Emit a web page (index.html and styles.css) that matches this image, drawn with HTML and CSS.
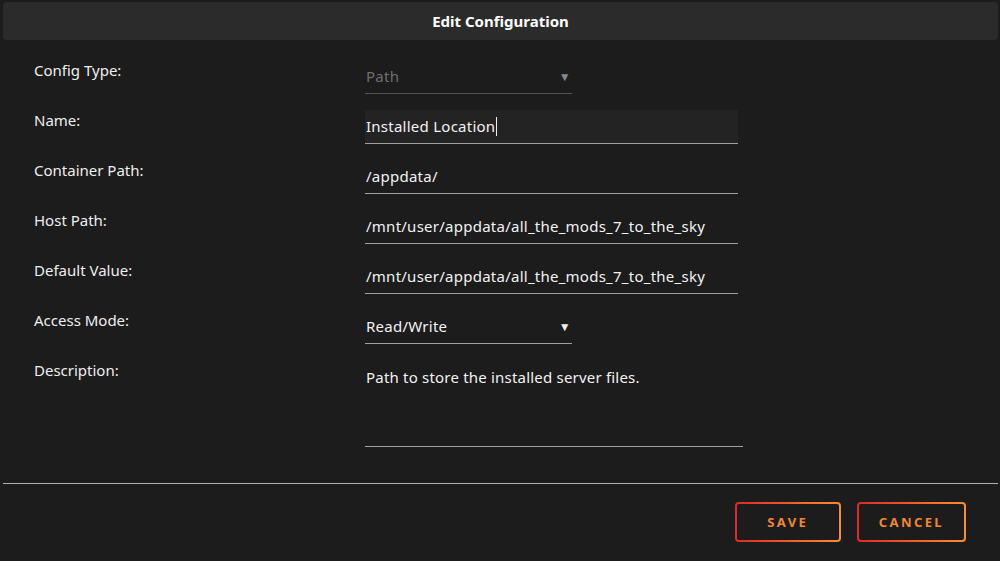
FILE: index.html
```html
<!DOCTYPE html>
<html lang="en">
<head>
    <meta charset="UTF-8">
    <meta name="viewport" content="width=device-width, initial-scale=1.0">
    <title>Edit Configuration</title>
    <link rel="stylesheet" href="styles.css">
</head>
<body>
    <div class="dialog">
        <div class="title-bar">Edit Configuration</div>

        <!-- Config form -->
        <div class="config-form">
            <label class="form-label">Config Type:</label>
            <div class="select-field disabled">
                <span>Path</span>
                <span class="arrow">&#9660;</span>
            </div>

            <label class="form-label">Name:</label>
            <div class="text-field active">
                <span>Installed Location</span><span class="caret"></span>
            </div>

            <label class="form-label">Container Path:</label>
            <div class="text-field"><span>/appdata/</span></div>

            <label class="form-label">Host Path:</label>
            <div class="text-field"><span>/mnt/user/appdata/all_the_mods_7_to_the_sky</span></div>

            <label class="form-label">Default Value:</label>
            <div class="text-field"><span>/mnt/user/appdata/all_the_mods_7_to_the_sky</span></div>

            <label class="form-label">Access Mode:</label>
            <div class="select-field">
                <span>Read/Write</span>
                <span class="arrow">&#9660;</span>
            </div>

            <label class="form-label">Description:</label>
            <div class="textarea-field">Path to store the installed server files.</div>
        </div>

        <div class="divider"></div>

        <div class="actions">
            <button class="action-button"><span>SAVE</span></button>
            <button class="action-button"><span>CANCEL</span></button>
        </div>
    </div>
</body>
</html>
```

FILE: styles.css
```css
body {
    margin: 0;
    background-color: #1c1c1c;
    font-family: "Noto Sans", "Open Sans", sans-serif;
    font-size: 15px;
    color: #f2f2f2;
}
.dialog {
    width: 1000px;
    height: 561px;
    padding: 2px 2px 0 3px;
    box-sizing: border-box;
}
.title-bar {
    background: #2b2b2b;
    border-radius: 4px;
    height: 38px;
    line-height: 38px;
    text-align: center;
    font-weight: bold;
    font-size: 15px;
    color: #fff;
}
.config-form {
    display: grid;
    grid-template-columns: 331px 1fr;
    row-gap: 16px;
    align-items: start;
    padding: 20px 0 0 31px;
}
.form-label {
    line-height: 20px;
    color: #eee;
}
.select-field,
.text-field {
    height: 34px;
    box-sizing: border-box;
    border-bottom: 1px solid #a0a0a0;
    display: flex;
    align-items: center;
    padding: 0 0 1px 1px;
    letter-spacing: 0.25px;
}
.select-field {
    width: 207px;
    justify-content: space-between;
    padding-right: 1px;
}
.select-field.disabled {
    color: #6f6f6f;
    border-bottom-color: #555;
}
.arrow {
    font-size: 12px;
    color: #eee;
}
.disabled .arrow {
    color: #888;
}
.text-field {
    width: 373px;
}
.text-field.active {
    background: #232323;
}
.caret {
    display: inline-block;
    width: 1px;
    height: 19px;
    background: #eee;
    margin-left: 1px;
}
.textarea-field {
    width: 378px;
    height: 87px;
    box-sizing: border-box;
    border-bottom: 1px solid #a0a0a0;
    padding: 7px 0 0 1px;
    letter-spacing: 0.2px;
}
.divider {
    height: 1px;
    background: #b0b0b0;
    margin-top: 36px;
}
.actions {
    display: flex;
    justify-content: flex-end;
    gap: 16px;
    padding: 18px 32px 0 0;
}
.action-button {
    height: 40px;
    min-width: 106px;
    padding: 0 20px;
    border: 2px solid transparent;
    border-radius: 4px;
    background: linear-gradient(#1c1c1c, #1c1c1c) padding-box,
                linear-gradient(90deg, #e22828, #ff8c2f) border-box;
    font-family: "Noto Sans", "Open Sans", sans-serif;
    font-size: 13px;
    font-weight: bold;
    letter-spacing: 2.4px;
    cursor: pointer;
}
.action-button span {
    color: #f3862e;
}
```
